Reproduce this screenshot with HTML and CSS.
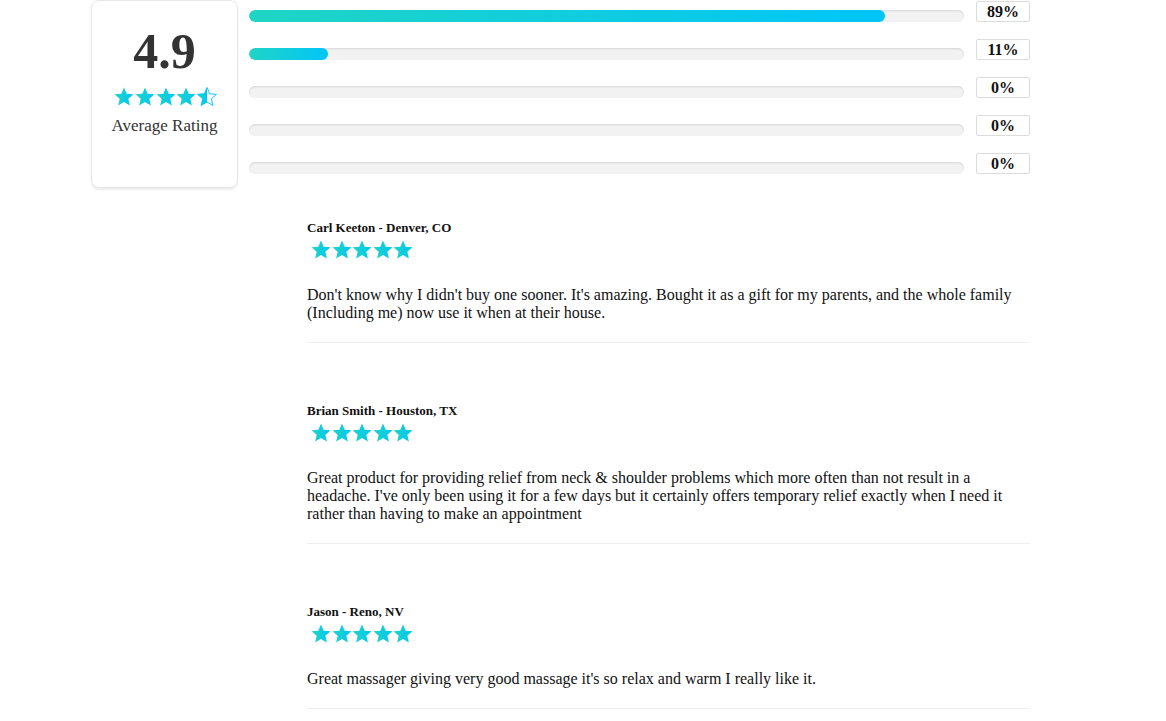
FILE: index.html
```html
<!DOCTYPE html>
<html lang="en">
<head>
  <meta charset="UTF-8">
  <title>Customer Reviews</title>
  <link rel="stylesheet" href="styles.css">
</head>
<body>
  <svg class="defs" width="0" height="0" aria-hidden="true">
    <defs>
      <linearGradient id="starFill" x1="0" y1="0" x2="1" y2="0">
        <stop offset="0" stop-color="#1fd5c4"/>
        <stop offset="1" stop-color="#02c5f4"/>
      </linearGradient>
      <linearGradient id="starHalf" x1="0" y1="0" x2="1" y2="0">
        <stop offset="0" stop-color="#1fd5c4"/>
        <stop offset="0.5" stop-color="#02c5f4"/>
        <stop offset="0.5" stop-color="#fff"/>
        <stop offset="1" stop-color="#fff"/>
      </linearGradient>
      <symbol id="star" viewBox="1.5 1.5 21 20">
        <path d="M12 17.27L18.18 21l-1.64-7.03L22 9.24l-7.19-.61L12 2 9.19 8.63 2 9.24l5.46 4.73L5.82 21z"/>
      </symbol>
    </defs>
  </svg>

  <div class="page">
    <div class="summary">
      <div class="score-card">
        <div class="score">4.9</div>
        <div class="stars">
          <svg class="star"><use href="#star"/></svg>
          <svg class="star"><use href="#star"/></svg>
          <svg class="star"><use href="#star"/></svg>
          <svg class="star"><use href="#star"/></svg>
          <svg class="star half"><use href="#star"/></svg>
        </div>
        <div class="score-label">Average Rating</div>
      </div>

      <div class="bars">
        <div class="bar-row">
          <div class="bar"><div class="bar-fill" style="width: 89%"></div></div>
          <div class="pct">89%</div>
        </div>
        <div class="bar-row">
          <div class="bar"><div class="bar-fill" style="width: 11%"></div></div>
          <div class="pct">11%</div>
        </div>
        <div class="bar-row">
          <div class="bar"><div class="bar-fill" style="width: 0%"></div></div>
          <div class="pct">0%</div>
        </div>
        <div class="bar-row">
          <div class="bar"><div class="bar-fill" style="width: 0%"></div></div>
          <div class="pct">0%</div>
        </div>
        <div class="bar-row">
          <div class="bar"><div class="bar-fill" style="width: 0%"></div></div>
          <div class="pct">0%</div>
        </div>
      </div>
    </div>

    <div class="reviews">
      <div class="review">
        <div class="review-name">Carl Keeton - Denver, CO</div>
        <div class="stars review-stars">
          <svg class="star"><use href="#star"/></svg>
          <svg class="star"><use href="#star"/></svg>
          <svg class="star"><use href="#star"/></svg>
          <svg class="star"><use href="#star"/></svg>
          <svg class="star"><use href="#star"/></svg>
        </div>
        <p class="review-text">Don't know why I didn't buy one sooner. It's amazing. Bought it as a gift for my parents, and the whole family (Including me) now use it when at their house.</p>
      </div>

      <div class="review">
        <div class="review-name">Brian Smith - Houston, TX</div>
        <div class="stars review-stars">
          <svg class="star"><use href="#star"/></svg>
          <svg class="star"><use href="#star"/></svg>
          <svg class="star"><use href="#star"/></svg>
          <svg class="star"><use href="#star"/></svg>
          <svg class="star"><use href="#star"/></svg>
        </div>
        <p class="review-text">Great product for providing relief from neck &amp; shoulder problems which more often than not result in a headache. I've only been using it for a few days but it certainly offers temporary relief exactly when I need it rather than having to make an appointment</p>
      </div>

      <div class="review">
        <div class="review-name">Jason - Reno, NV</div>
        <div class="stars review-stars">
          <svg class="star"><use href="#star"/></svg>
          <svg class="star"><use href="#star"/></svg>
          <svg class="star"><use href="#star"/></svg>
          <svg class="star"><use href="#star"/></svg>
          <svg class="star"><use href="#star"/></svg>
        </div>
        <p class="review-text">Great massager giving very good massage it's so relax and warm I really like it.</p>
      </div>
    </div>
  </div>
</body>
</html>
```

FILE: styles.css
```css
body {
  margin: 0;
  font-family: 'Liberation Serif', 'Times New Roman', serif;
  color: #111;
  background: #fff;
}
.defs {
  position: absolute;
  width: 0;
  height: 0;
}
.page {
  padding-left: 91px;
}
.summary {
  display: flex;
  align-items: flex-start;
  gap: 11px;
}
.score-card {
  box-sizing: border-box;
  width: 147px;
  height: 188px;
  border: 1px solid #e6e6e6;
  border-radius: 8px;
  box-shadow: 0 2px 2px rgba(0,0,0,0.08);
  text-align: center;
  padding-top: 22px;
}
.score {
  font-size: 50px;
  font-weight: bold;
  line-height: 56px;
  color: #333;
}
.stars {
  display: flex;
  gap: 0.6px;
}
.score-card .stars {
  justify-content: center;
  margin-top: 8px;
  padding-left: 2px;
}
.star {
  width: 20px;
  height: 19px;
  fill: url(#starFill);
}
.star.half {
  fill: url(#starHalf);
  stroke: #02c5f4;
  stroke-width: 1;
}
.score-label {
  font-size: 17px;
  color: #333;
  margin-top: 10px;
}
.bars {
  width: 781px;
}
.bar-row {
  display: flex;
  gap: 12px;
  height: 38px;
}
.bar {
  flex: 1;
  height: 12px;
  margin-top: 10px;
  background: #f2f2f2;
  border-radius: 6px;
  box-shadow: inset 0 1px 2px rgba(0,0,0,0.12);
  overflow: hidden;
}
.bar-fill {
  height: 100%;
  border-radius: 6px;
  background: linear-gradient(to right, #1fd5c4, #02c5f8);
}
.pct {
  box-sizing: border-box;
  width: 54px;
  height: 21px;
  margin-top: 1px;
  border: 1px solid #dcdcdc;
  border-radius: 2px;
  text-align: center;
  font-weight: bold;
  font-size: 16px;
  line-height: 19px;
}
.reviews {
  margin-left: 216px;
  width: 723px;
  padding-top: 30px;
}
.review {
  border-bottom: 1px solid #eeeeee;
  padding-bottom: 20px;
  margin-bottom: 60px;
}
.review-name {
  font-size: 13px;
  font-weight: bold;
  line-height: 16px;
}
.review-stars {
  margin-top: 4px;
  margin-left: 4px;
}
.review-text {
  margin: 27px 0 0;
  font-size: 16px;
  line-height: 18px;
}
```
